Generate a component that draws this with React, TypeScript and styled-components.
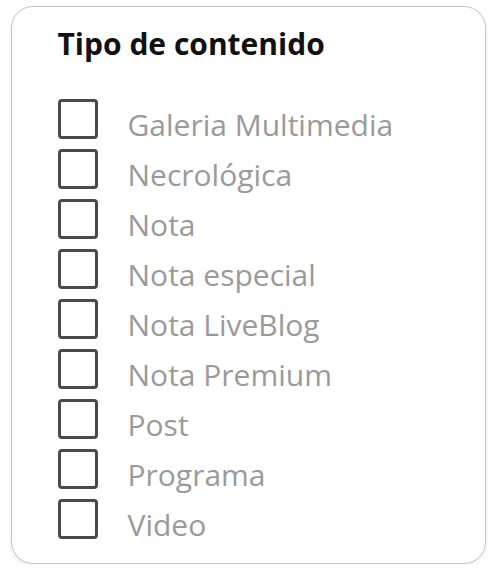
import styled, { createGlobalStyle } from 'styled-components';

const GlobalStyle = createGlobalStyle`
  body {
    margin: 0;
    background: #fff;
    font-family: 'Open Sans', 'Liberation Sans', sans-serif;
  }
`;

const tipos = [
  'Galeria Multimedia',
  'Necrológica',
  'Nota',
  'Nota especial',
  'Nota LiveBlog',
  'Nota Premium',
  'Post',
  'Programa',
  'Video',
];

export default function App() {
  return (
    <>
      <GlobalStyle />
      <FilterCard>
        <FilterTitle>Tipo de contenido</FilterTitle>
        <OptionList>
          {tipos.map((tipo) => (
            <OptionRow key={tipo}>
              <Box type="checkbox" />
              <OptionLabel>{tipo}</OptionLabel>
            </OptionRow>
          ))}
        </OptionList>
      </FilterCard>
    </>
  );
}

const FilterCard = styled.div`
  margin: 6px 11px 0;
  width: 475px;
  height: 558px;
  box-sizing: border-box;
  padding: 17px 0 0 45.5px;
  border: 1.5px solid #c4c4c4;
  border-radius: 22px;
  box-shadow: 0 2px 4px rgba(0, 0, 0, 0.08);
  background: #fff;
`;

const FilterTitle = styled.div`
  font-size: 30px;
  font-weight: 700;
  color: #111;
  line-height: 40px;
  margin-bottom: 35px;
`;

const OptionList = styled.div`
  display: flex;
  flex-direction: column;
  gap: 10px;
`;

const OptionRow = styled.label`
  display: flex;
  align-items: center;
  gap: 30px;
  height: 40px;
`;

const Box = styled.input`
  appearance: none;
  margin: 0;
  width: 40px;
  height: 40px;
  box-sizing: border-box;
  border: 3px solid #4a4a4a;
  border-radius: 4px;
  background: #fff;
  flex-shrink: 0;
`;

const OptionLabel = styled.span`
  font-size: 30px;
  color: #9a9a9a;
  line-height: 40px;
  position: relative;
  top: 6px;
`;
